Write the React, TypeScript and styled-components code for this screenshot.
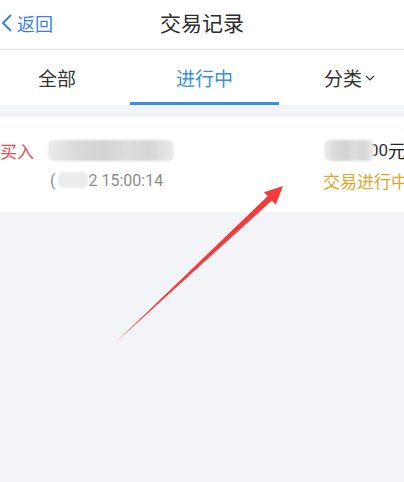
import React from 'react'
import styled, { createGlobalStyle } from 'styled-components'

const GlobalStyle = createGlobalStyle`
  html, body {
    margin: 0;
    padding: 0;
    background: #f3f4f8;
    font-family: "Noto Sans CJK SC", Roboto, "Liberation Sans", sans-serif;
  }
`

const Page = styled.div`
  position: relative;
  width: 404px;
  height: 482px;
  overflow: hidden;
  background: #f3f4f8;
`

const Header = styled.div`
  display: grid;
  grid-template-columns: 1fr auto 1fr;
  align-items: center;
  height: 50px;
  background: #fff;
  border-bottom: 1px solid #e4e4e6;
  box-sizing: border-box;
`

const Back = styled.div`
  display: flex;
  align-items: center;
  gap: 4px;
  padding-left: 1px;
  color: #3d7fdc;
  font-size: 18px;
  margin-top: -4px;
`

const Title = styled.div`
  font-size: 21px;
  color: #2b2b2b;
  margin-top: -6px;
`

const Tabs = styled.div`
  display: grid;
  grid-template-columns: 114px 149px 1fr;
  column-gap: 16px;
  height: 55px;
  background: #fff;
`

const Tab = styled.div<{ $active?: boolean }>`
  display: flex;
  align-items: center;
  justify-content: center;
  gap: 3px;
  font-size: 19px;
  color: ${p => (p.$active ? '#3a8fdb' : '#333')};
  border-bottom: 3px solid ${p => (p.$active ? '#3a8fdb' : 'transparent')};
  padding-top: 3px;
  box-sizing: border-box;
`

const Card = styled.div`
  display: grid;
  grid-template-columns: 48px 1fr auto;
  grid-template-rows: 30px 30px;
  align-items: center;
  margin-top: 12px;
  padding: 18px 0 17px;
  background: #fff;
`

const Kind = styled.div`
  font-size: 17px;
  color: #e34a55;
`

const Blur = styled.div<{ $w: number }>`
  position: relative;
  z-index: 1;
  width: ${p => p.$w}px;
  height: 21px;
  border-radius: 6px;
  background: linear-gradient(
    90deg,
    #ececec 0%,
    #dadada 22%,
    #d3d3d3 45%,
    #dedede 62%,
    #d6d6d6 80%,
    #eaeaea 100%
  );
  filter: blur(1px);
`

const Time = styled.div`
  display: flex;
  align-items: center;
  font-family: Roboto, "Liberation Sans", sans-serif;
  font-size: 16px;
  color: #8c8c8c;
  grid-column: 2;
  padding-left: 2px;
`

const TimeBlur = styled.span`
  display: inline-block;
  width: 30px;
  height: 16px;
  margin: 0 0 0 3px;
  border-radius: 5px;
  background: #ececec;
  filter: blur(1px);
`

const Amount = styled.div`
  display: flex;
  align-items: center;
  justify-content: flex-end;
  font-size: 18px;
  color: #222;
  margin-right: -2px;
`

const Cents = styled.span`
  margin-left: -10px;
  font-family: Roboto, "Liberation Sans", sans-serif;
  font-size: 17px;
  color: #333;
`

const Status = styled.div`
  grid-column: 3;
  font-size: 17px;
  color: #e1a52c;
  white-space: nowrap;
  margin-right: -4px;
  padding-left: 322px;
  margin-left: -322px;
`

const Arrow = styled.svg`
  position: absolute;
  left: 0;
  top: 0;
  pointer-events: none;
`

export default function App() {
  return (
    <Page>
      <GlobalStyle />
      <Header>
        <Back>
          <svg width="12" height="20" viewBox="0 0 12 20">
            <path d="M10 2 L2 10 L10 18" fill="none" stroke="#3d7fdc" strokeWidth="2" />
          </svg>
          返回
        </Back>
        <Title>交易记录</Title>
        <div />
      </Header>
      <Tabs>
        <Tab>全部</Tab>
        <Tab $active>进行中</Tab>
        <Tab>
          分类
          <svg width="10" height="8" viewBox="0 0 10 8">
            <path d="M1 2 L5 6 L9 2" fill="none" stroke="#333" strokeWidth="1.2" />
          </svg>
        </Tab>
      </Tabs>
      <Card>
        <Kind>买入</Kind>
        <Blur $w={126} />
        <Amount>
          <Blur $w={50} />
          <Cents>.00</Cents>
          <span>元</span>
        </Amount>
        <Time>
          (<TimeBlur />2 15:00:14
        </Time>
        <Status>交易进行中</Status>
      </Card>
      <Arrow width="404" height="482" viewBox="0 0 404 482">
        <polygon
          points="115,343 271.9,200.5 275.8,204.5 283,186 264,192.3 267.8,196.1"
          fill="#f43b3b"
        />
      </Arrow>
    </Page>
  )
}
